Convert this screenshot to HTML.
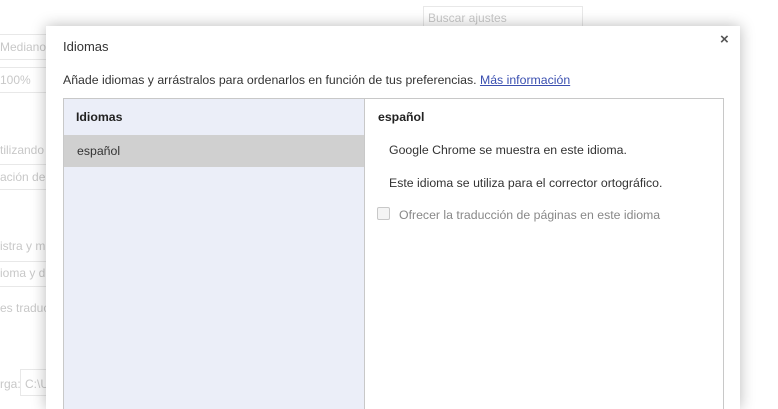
<!DOCTYPE html>
<html style="overflow:hidden;height:409px"><head><style>
body{margin:0;width:778px;height:409px;overflow:hidden;background:#fff;font-family:"Liberation Sans",sans-serif;position:relative}
.bg{position:absolute;color:#c8c8c8;font-size:12px}
.bx{position:absolute;border:1px solid #e8e8e8;height:24px}
.dlg{position:absolute;left:46px;top:26px;width:694px;height:383px;background:#fff;box-shadow:0 0 14px rgba(0,0,0,.28);overflow:hidden}
.t{position:absolute;font-size:12.3px;color:#333;white-space:nowrap}
</style></head><body>
<div class="bx" style="left:423px;top:6px;width:158px;height:24px"></div>
<div class="bg" style="left:428px;top:11px">Buscar ajustes</div>
<div class="bx" style="left:-2px;top:34px;width:50px"></div>
<div class="bg" style="left:0;top:40px">Mediano</div>
<div class="bx" style="left:-2px;top:67px;width:50px"></div>
<div class="bg" style="left:0;top:73px">100%</div>
<div class="bg" style="left:0;top:143px">tilizando</div>
<div class="bx" style="left:-2px;top:164px;width:50px"></div>
<div class="bg" style="left:0;top:170px">ación de</div>
<div class="bg" style="left:0;top:239px">istra y m</div>
<div class="bx" style="left:-2px;top:261px;width:50px"></div>
<div class="bg" style="left:0;top:266px">ioma y d</div>
<div class="bg" style="left:0;top:301px">es traduc</div>
<div class="bg" style="left:0;top:377px">rga:</div>
<div class="bx" style="left:20px;top:369px;width:28px;height:25px"></div>
<div class="bg" style="left:25px;top:377px">C:\U</div>
<div class="dlg">
<div class="t" style="left:17px;top:13px;font-size:13px">Idiomas</div>
<div class="t" style="left:674px;top:5px;font-size:15px;color:#555;font-weight:bold">×</div>
<div class="t" style="left:17px;top:47px">Añade idiomas y arrástralos para ordenarlos en función de tus preferencias. <span style="color:#3a4fb0;text-decoration:underline">Más información</span></div>
<div style="position:absolute;left:17px;top:72px;width:659px;height:312px;border:1px solid #c8c8c8;border-bottom:none">
<div style="position:absolute;left:0;top:0;width:300px;height:100%;background:#ebeef8;border-right:1px solid #c8c8c8"></div>
<div class="t" style="left:12px;top:11px;font-weight:bold;color:#222">Idiomas</div>
<div style="position:absolute;left:0;top:36px;width:300px;height:32px;background:#d0d0d0"></div>
<div class="t" style="left:13px;top:45px">español</div>
<div class="t" style="left:314px;top:11px;font-weight:bold;color:#222">español</div>
<div class="t" style="left:325px;top:44px">Google Chrome se muestra en este idioma.</div>
<div class="t" style="left:325px;top:77px">Este idioma se utiliza para el corrector ortográfico.</div>
<div style="position:absolute;left:313px;top:108px;width:11px;height:11px;border:1px solid #c8c8c8;border-radius:2px;background:#f4f4f4"></div>
<div class="t" style="left:335px;top:109px;color:#888">Ofrecer la traducción de páginas en este idioma</div>
</div>
</div>
</body></html>
